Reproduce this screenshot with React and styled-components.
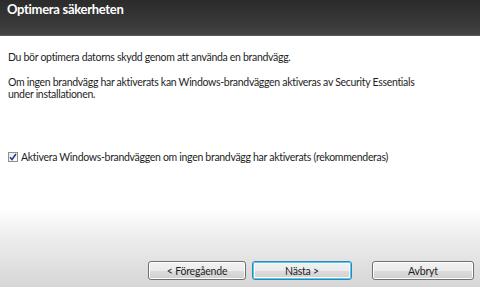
import React, { useState } from "react";
import styled, { createGlobalStyle } from "styled-components";

const GlobalStyle = createGlobalStyle`
  html, body {
    margin: 0;
    padding: 0;
    background: #ffffff;
  }
  * {
    box-sizing: border-box;
  }
`;

const Window = styled.div`
  width: 480px;
  height: 287px;
  display: flex;
  flex-direction: column;
  font-family: Lato, "Open Sans", "Liberation Sans", sans-serif;
  font-size: 10.5px;
  letter-spacing: -0.3px;
  color: #1e1e1e;
  background: linear-gradient(
    to bottom,
    #ffffff 0px,
    #ffffff 208px,
    #ececec 240px,
    #d6d6d6 287px
  );
  overflow: hidden;
`;

const Header = styled.div`
  height: 36px;
  flex-shrink: 0;
  padding: 0 7px;
  background: linear-gradient(to bottom, #2b2b2b, #3a3a3a 70%, #444444);
  border-bottom: 1px solid #5a5a5a;
`;

const Title = styled.h1`
  margin: 0;
  font-size: 13px;
  line-height: 19px;
  font-weight: 700;
  letter-spacing: -0.3px;
  color: #ffffff;
`;

const Body = styled.div`
  flex: 1;
  display: flex;
  flex-direction: column;
  padding: 15px 8px 0;
`;

const Text = styled.p`
  margin: 0 0 ${(p) => p.$gap || 0}px;
  line-height: 12.5px;
`;

const CheckRow = styled.label`
  display: flex;
  align-items: center;
  gap: 3px;
  line-height: 12.5px;
  cursor: default;
`;

const Box = styled.span`
  width: 10px;
  height: 10px;
  flex-shrink: 0;
  border: 1px solid #8e8f8f;
  background: linear-gradient(to bottom right, #e8ebef, #ffffff);
  display: flex;
  align-items: center;
  justify-content: center;
`;

const Footer = styled.div`
  display: flex;
  justify-content: flex-end;
  padding: 0 6px 7px 0;
`;

const Button = styled.button`
  width: ${(p) => p.$w}px;
  height: 19px;
  margin-left: ${(p) => p.$ml || 0}px;
  padding: 0;
  font-family: inherit;
  font-size: 10.5px;
  letter-spacing: -0.2px;
  color: #1e1e1e;
  border-radius: 3px;
  border: 1px solid ${(p) => (p.$primary ? "#3c7fb1" : "#707070")};
  background: linear-gradient(
    to bottom,
    #f2f2f2 0%,
    #ebebeb 50%,
    #dddddd 51%,
    #cfcfcf 100%
  );
  box-shadow: ${(p) =>
    p.$primary
      ? "inset 0 0 0 1px #48d0f8, inset 0 0 0 2px #ffffff"
      : "inset 0 0 0 1px #ffffff"};
`;

export default function App() {
  const [checked, setChecked] = useState(true);
  return (
    <>
      <GlobalStyle />
      <Window>
        <Header>
          <Title>Optimera säkerheten</Title>
        </Header>
        <Body>
          <Text $gap={12}>
            Du bör optimera datorns skydd genom att använda en brandvägg.
          </Text>
          <Text $gap={50}>
            Om ingen brandvägg har aktiverats kan Windows-brandväggen aktiveras
            av Security Essentials
            <br />
            under installationen.
          </Text>
          <CheckRow onClick={() => setChecked(!checked)}>
            <Box>
              {checked && (
                <svg width="8" height="8" viewBox="0 0 8 8">
                  <path
                    d="M1 4.2 L3 6.5 L7 1"
                    fill="none"
                    stroke="#2a3c88"
                    strokeWidth="1.6"
                  />
                </svg>
              )}
            </Box>
            Aktivera Windows-brandväggen om ingen brandvägg har aktiverats
            (rekommenderas)
          </CheckRow>
        </Body>
        <Footer>
          <Button $w={98}>&lt; Föregående</Button>
          <Button $w={100} $ml={6} $primary>
            Nästa &gt;
          </Button>
          <Button $w={102} $ml={20}>
            Avbryt
          </Button>
        </Footer>
      </Window>
    </>
  );
}
